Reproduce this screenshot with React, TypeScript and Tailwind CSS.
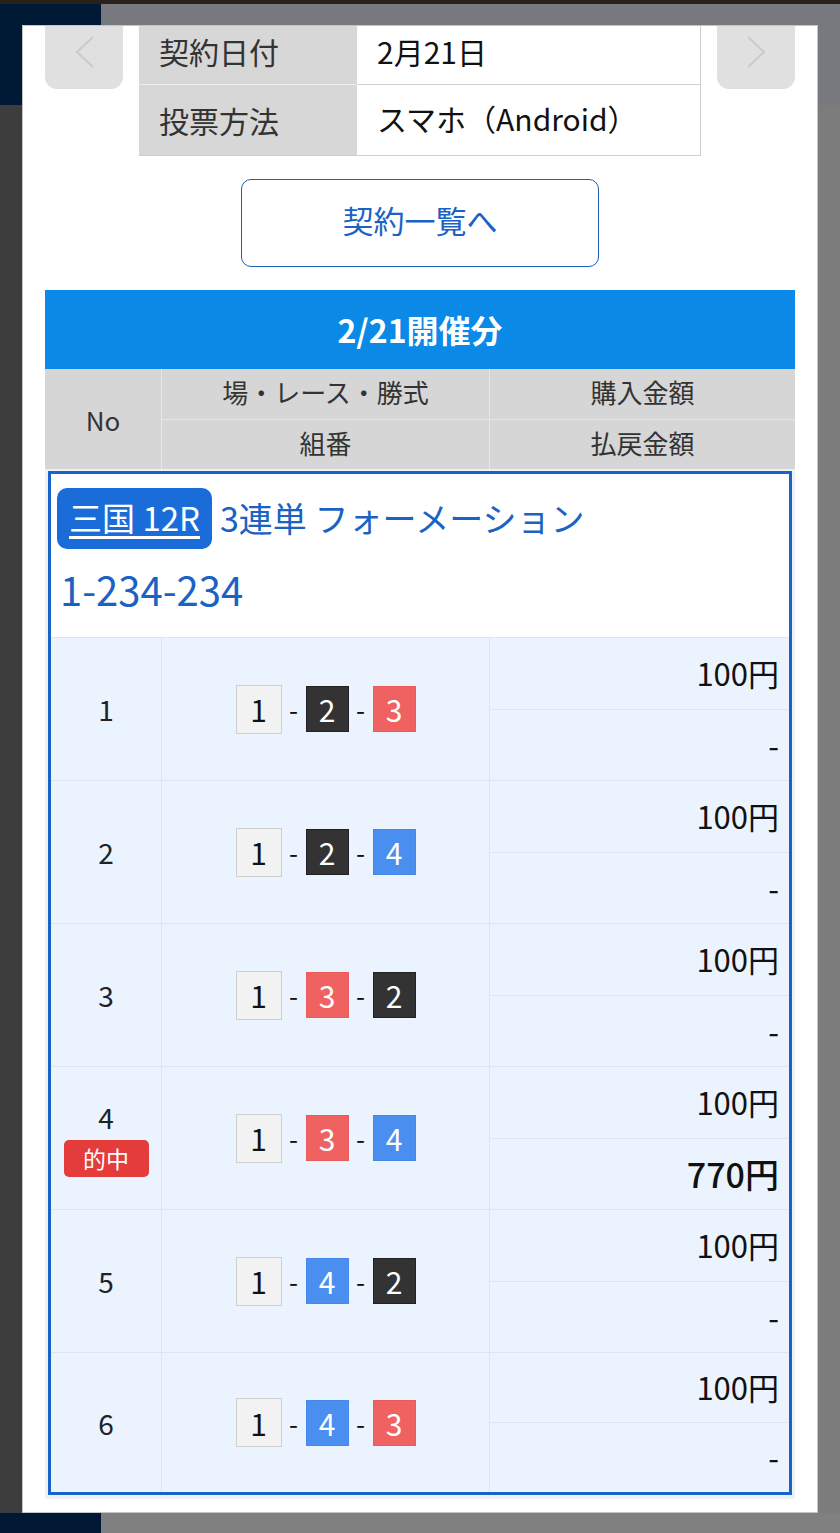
import { ReactNode } from "react";

type Bet = {
  no: number;
  combo: [number, number, number];
  amount: string;
  payout: string;
  hit?: boolean;
};

const bets: Bet[] = [
  { no: 1, combo: [1, 2, 3], amount: "100円", payout: "-" },
  { no: 2, combo: [1, 2, 4], amount: "100円", payout: "-" },
  { no: 3, combo: [1, 3, 2], amount: "100円", payout: "-" },
  { no: 4, combo: [1, 3, 4], amount: "100円", payout: "770円", hit: true },
  { no: 5, combo: [1, 4, 2], amount: "100円", payout: "-" },
  { no: 6, combo: [1, 4, 3], amount: "100円", payout: "-" },
];

// boat number colours
const boatStyle: Record<number, string> = {
  1: "w-[46px] h-[49px] bg-[#f2f2f2] border border-[#cfcfcf] text-[#111]",
  2: "w-[43px] h-[46px] bg-[#333333] border border-[#222] text-white",
  3: "w-[43px] h-[46px] bg-[#f06262] border border-[#e85c5c] text-white",
  4: "w-[43px] h-[46px] bg-[#4a8ff0] border border-[#4488ea] text-white",
};

function Boat({ n }: { n: number }) {
  return (
    <span
      className={`flex items-center justify-center text-[30px] leading-none ${boatStyle[n]}`}
    >
      {n}
    </span>
  );
}

function Dash() {
  return (
    <span className="w-[24px] text-center text-[26px] leading-none text-[#111]">
      -
    </span>
  );
}

function Chevron({ dir }: { dir: "left" | "right" }) {
  return (
    <svg width="19" height="32" viewBox="0 0 19 32" fill="none">
      <polyline
        points={dir === "left" ? "18,1 2,16 18,31" : "1,1 17,16 1,31"}
        stroke="#cacaca"
        strokeWidth="2"
      />
    </svg>
  );
}

function InfoRow({
  label,
  value,
  height,
  last,
}: {
  label: string;
  value: ReactNode;
  height: string;
  last?: boolean;
}) {
  return (
    <div className={`grid grid-cols-[218px_344px] ${height}`}>
      <div
        className={`flex items-center pl-[20px] bg-[#d7d7d7] text-[30px] text-[#333] ${
          last ? "border-b border-[#cfcfcf]" : "border-b border-[#ececec] pb-[8px]"
        }`}
      >
        {label}
      </div>
      <div
        className={`flex items-center pl-[20px] bg-white text-[30px] text-[#111] border-r border-b border-[#cfcfcf] ${
          last ? "pb-[4px]" : "pb-[8px]"
        }`}
      >
        {value}
      </div>
    </div>
  );
}

function BetRow({ bet, height }: { bet: Bet; height: string }) {
  return (
    <div
      className={`grid grid-cols-[111px_328px_299px] ${height} border-t border-[#dfe5ec] bg-[#eaf3fe]`}
    >
      <div className="flex flex-col items-center justify-center border-r border-[#dfe5ec]">
        <span className="text-[28px] leading-[34px] text-[#222]">{bet.no}</span>
        {bet.hit && (
          <span className="mt-[6px] flex h-[37px] w-[85px] items-center justify-center rounded-[5px] bg-[#e43b3b] text-[23px] leading-none text-white">
            的中
          </span>
        )}
      </div>
      <div className="flex items-center justify-center border-r border-[#dfe5ec]">
        <Boat n={bet.combo[0]} />
        <Dash />
        <Boat n={bet.combo[1]} />
        <Dash />
        <Boat n={bet.combo[2]} />
      </div>
      <div className="flex flex-col">
        <div className="flex flex-1 items-center justify-end pr-[10px] border-b border-[#dfe5ec] text-[31px] text-[#111]">
          {bet.amount}
        </div>
        <div
          className={`flex flex-1 items-center justify-end pr-[10px] text-[#111] ${
            bet.hit ? "text-[34px] font-medium" : "text-[31px]"
          }`}
        >
          {bet.payout}
        </div>
      </div>
    </div>
  );
}

export default function App() {
  return (
    <div className="relative h-[1533px] w-[840px] overflow-hidden bg-[#7b7b7b] font-['Noto_Sans_CJK_JP',sans-serif]">
      {/* dimmed page behind the modal */}
      <div className="h-[4px] bg-[#2a211c]" />
      <div className="flex h-[101px]">
        <div className="w-[101px] bg-[#001a36]" />
        <div className="flex-1 bg-[#77797f]" />
      </div>
      <div className="flex h-[1408px]">
        <div className="w-[62px] bg-[#3d3d3d]" />
        <div className="flex-1 bg-[#7c7c7c]" />
      </div>
      <div className="flex h-[20px]">
        <div className="w-[101px] bg-[#001833]" />
        <div className="flex-1 bg-[#808080]" />
      </div>

      {/* modal */}
      <div className="absolute left-[22px] top-[25px] h-[1488px] w-[796px] overflow-hidden border border-[#c4c4c4] bg-white">
        <div className="px-[22px]">
          {/* nav + contract info */}
          <div className="flex items-start justify-between">
            <button className="flex h-[63px] w-[78px] items-center justify-center rounded-b-[12px] bg-[#e0e0e0] pb-[12px]">
              <Chevron dir="left" />
            </button>
            <div className="w-[562px]">
              <InfoRow label="契約日付" value="2月21日" height="h-[59px]" />
              <InfoRow
                label="投票方法"
                value="スマホ（Android）"
                height="h-[71px]"
                last
              />
            </div>
            <button className="flex h-[63px] w-[78px] items-center justify-center rounded-b-[12px] bg-[#e0e0e0] pb-[12px]">
              <Chevron dir="right" />
            </button>
          </div>

          <div className="mt-[23px] flex justify-center">
            <button className="flex h-[88px] w-[358px] items-center justify-center rounded-[10px] border border-[#1c5fb8] pb-[6px] text-[31px] text-[#1a62c4]">
              契約一覧へ
            </button>
          </div>

          {/* bet table */}
          <div className="mt-[23px]">
            <div className="flex h-[79px] items-center justify-center bg-[#0a89e6] pb-[2px] text-[32px] font-bold text-white">
              2/21開催分
            </div>
            <div className="grid h-[100px] grid-cols-[117px_328px_305px] bg-[#d6d6d6] text-[26px] text-[#333]">
              <div className="row-span-2 flex items-center justify-center border-r border-[#e6e6e6]">
                No
              </div>
              <div className="flex items-center justify-center border-b border-r border-[#e6e6e6] pb-[4px]">
                場・レース・勝式
              </div>
              <div className="flex items-center justify-center border-b border-[#e6e6e6] pb-[4px]">
                購入金額
              </div>
              <div className="flex items-center justify-center border-r border-[#e6e6e6] pb-[4px]">
                組番
              </div>
              <div className="flex items-center justify-center pb-[4px]">払戻金額</div>
            </div>

            <div className="bg-[#eef1f4] px-[3px] pt-[2px] pb-[4px]">
              <div className="border-[3px] border-[#1763c9]">
                <div className="h-[163px] bg-white pl-[6px] pt-[14px]">
                  <div className="flex items-center">
                    <span className="flex h-[61px] w-[155px] items-center justify-center rounded-[10px] bg-[#1a6cd8] pb-[2px] text-[33px] text-white underline underline-offset-[5px]">
                      三国 12R
                    </span>
                    <span className="ml-[8px] pb-[2px] text-[34px] text-[#1a62c4]">
                      3連単 フォーメーション
                    </span>
                  </div>
                  <div className="mt-[14px] pl-[3px] text-[40px] leading-[52px] text-[#1a62c4]">
                    1-234-234
                  </div>
                </div>
                {bets.map((bet, i) => (
                  <BetRow
                    key={bet.no}
                    bet={bet}
                    height={i === bets.length - 1 ? "h-[140px]" : "h-[143px]"}
                  />
                ))}
              </div>
            </div>
          </div>
        </div>
      </div>
    </div>
  );
}
